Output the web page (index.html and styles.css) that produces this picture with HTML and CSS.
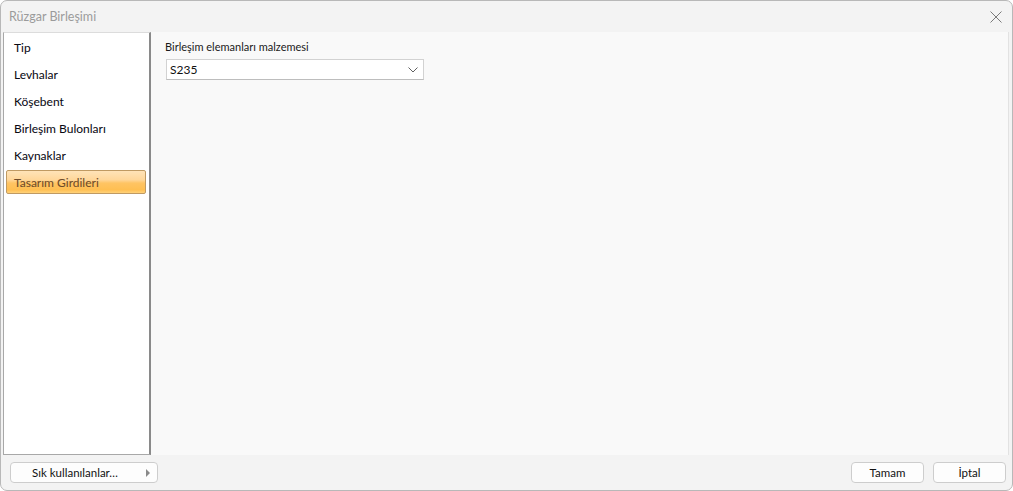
FILE: index.html
```html
<!DOCTYPE html>
<html lang="tr">
<head>
<meta charset="utf-8">
<title>Rüzgar Birleşimi</title>
<link rel="stylesheet" href="styles.css">
</head>
<body>
<div class="window">
  <div class="titlebar">
    <span class="title">Rüzgar Birleşimi</span>
    <svg class="close" width="12" height="12" viewBox="0 0 12 12"><path d="M0.5 0.5 L11.5 11.5 M11.5 0.5 L0.5 11.5" stroke="#7a7a7a" stroke-width="1" fill="none"/></svg>
  </div>
  <div class="main">
    <ul class="nav">
      <li class="nav-item">Tip</li>
      <li class="nav-item">Levhalar</li>
      <li class="nav-item">Köşebent</li>
      <li class="nav-item">Birleşim Bulonları</li>
      <li class="nav-item">Kaynaklar</li>
      <li class="nav-item active">Tasarım Girdileri</li>
    </ul>
    <div class="content">
      <div class="field-label">Birleşim elemanları malzemesi</div>
      <div class="select">
        <span class="select-value">S235</span>
        <svg class="chevron" width="10" height="6" viewBox="0 0 10 6"><path d="M0.5 0.5 L5 5 L9.5 0.5" stroke="#606060" stroke-width="1" fill="none"/></svg>
      </div>
    </div>
  </div>
  <div class="footer">
    <button class="btn btn-fav"><span class="fav-text">Sık kullanılanlar…</span><span class="tri"></span></button>
    <div class="spacer"></div>
    <button class="btn btn-std">Tamam</button>
    <button class="btn btn-std">İptal</button>
  </div>
</div>
</body>
</html>
```
FILE: styles.css
```css
html, body {
  margin: 0;
  padding: 0;
  background: #ffffff;
}
body {
  font-family: Lato, "Liberation Sans", Arial, sans-serif;
}
.window {
  box-sizing: border-box;
  width: 1013px;
  height: 491px;
  border: 1px solid #b8b8b8;
  border-radius: 7px;
  background: #f3f3f3;
  display: flex;
  flex-direction: column;
  overflow: hidden;
}
.titlebar {
  height: 31px;
  flex: none;
  display: flex;
  align-items: center;
  padding: 0 10px 0 8px;
}
.title {
  flex: 1;
  font-family: Lato, "Liberation Sans", sans-serif;
  font-size: 12.5px;
  color: #9b9b9b;
}
.close {
  display: block;
}
.main {
  flex: none;
  height: 423px;
  display: flex;
  padding: 0 3px 0 2px;
}
.nav {
  list-style: none;
  margin: 0;
  padding: 3px 0 0 0;
  width: 145px;
  background: #ffffff;
  border-top: 1px solid #dcdcdc;
  border-left: 1px solid #a8a8a8;
  border-bottom: 1px solid #a8a8a8;
  border-right: 2px solid #8a8a8a;
  flex: none;
}
.nav-item {
  box-sizing: border-box;
  height: 23px;
  margin: 0 3px 4px 2px;
  padding-left: 7px;
  display: flex;
  align-items: center;
  font-size: 12px;
  color: #0a0a14;
  border: 1px solid transparent;
  border-radius: 2px;
  -webkit-text-stroke: 0.05px #0a0a14;
}
.nav-item.active {
  height: 24px;
  margin-top: -1px;
  color: #6e4b2a;
  -webkit-text-stroke: 0.05px #6e4b2a;
  border-color: #c09a62;
  background: linear-gradient(to bottom, #ffe3b8 0%, #ffd79a 40%, #ffc463 55%, #ffbf52 85%, #ffd27a 100%);
}
.content {
  flex: 1;
  background: #f9f9f9;
  border-right: 1px solid #e2e2e2;
  padding: 7px 0 0 14px;
}
.field-label {
  font-size: 11px;
  color: #1a1a1a;
  height: 15px;
  line-height: 15px;
  margin-bottom: 5px;
}
.select {
  box-sizing: border-box;
  width: 258px;
  height: 21px;
  margin-left: 1px;
  background: #ffffff;
  border: 1px solid #d2d2d2;
  border-bottom-color: #bdbdbd;
  display: flex;
  align-items: center;
  padding: 0 3px 0 3px;
}
.select-value {
  flex: 1;
  font-size: 12px;
  color: #111;
}
.chevron {
  display: block;
  margin-right: 2px;
}
.footer {
  flex: 1;
  display: flex;
  align-items: center;
  padding: 0 6px 0 9px;
  gap: 9px;
}
.spacer {
  flex: 1;
}
.btn {
  box-sizing: border-box;
  height: 21px;
  border: 1px solid #cdcdcd;
  border-radius: 4px;
  background: #fdfdfd;
  font-family: Lato, "Liberation Sans", Arial, sans-serif;
  font-size: 11.5px;
  color: #111;
  padding: 0;
  margin: 0;
  display: flex;
  align-items: center;
  justify-content: center;
}
.btn-fav {
  width: 148px;
  justify-content: flex-start;
  padding-left: 21px;
  padding-right: 7px;
}
.fav-text {
  flex: 1;
  text-align: left;
}
.tri {
  width: 0;
  height: 0;
  border-top: 4px solid transparent;
  border-bottom: 4px solid transparent;
  border-left: 4px solid #8a8a8a;
}
.btn-std {
  width: 73px;
}
```
